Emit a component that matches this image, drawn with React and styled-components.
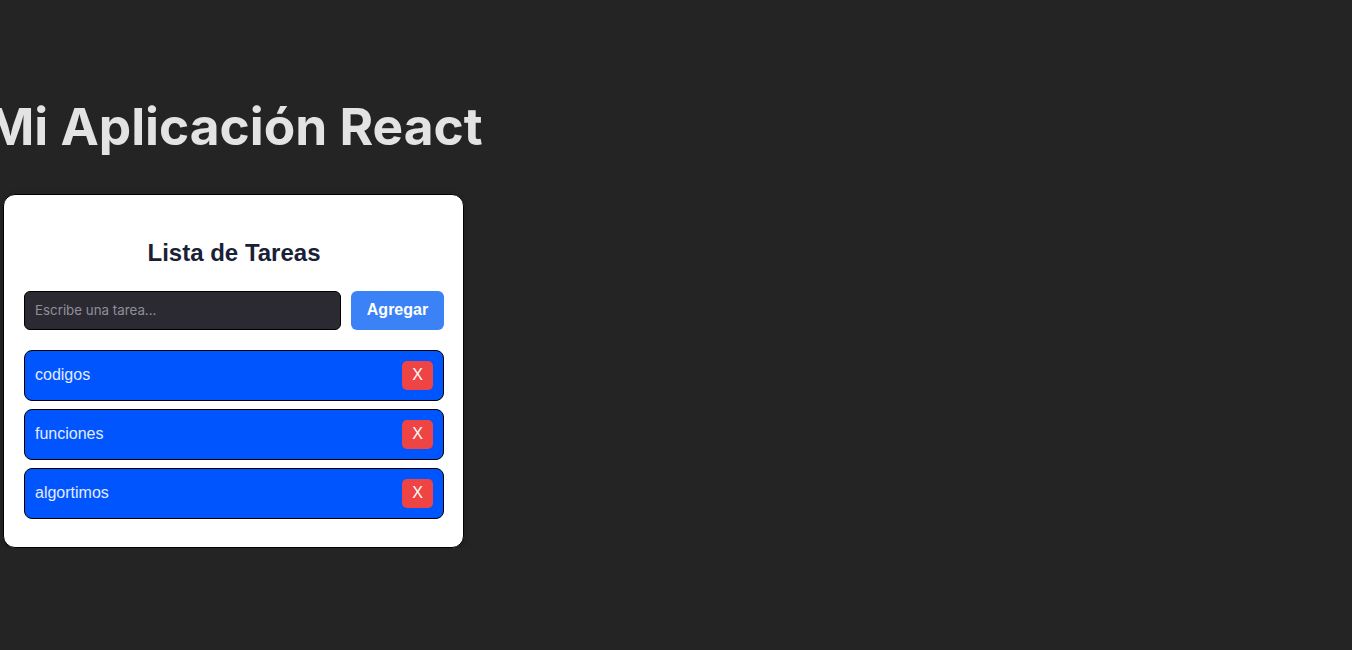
import React, { useState } from 'react';
import styled, { createGlobalStyle } from 'styled-components';

const GlobalStyle = createGlobalStyle`
  html, body {
    margin: 0;
    padding: 0;
    background-color: #242424;
  }
  body {
    font-family: Inter, "Liberation Sans", sans-serif;
    color: rgba(255, 255, 255, 0.87);
  }
`;

const Page = styled.div`
  width: 461px;
  margin-left: 3px;
  padding-top: 98px;
  display: flex;
  flex-direction: column;
  align-items: center;
`;

const Title = styled.h1`
  margin: 0 0 39px;
  font-family: Inter, sans-serif;
  font-size: 51.4px;
  line-height: 1.1;
  font-weight: 700;
  white-space: nowrap;
  color: #e3e3e3;
  transform: translateX(1px);
`;

const Card = styled.div`
  box-sizing: border-box;
  width: 100%;
  background: #fff;
  border: 1px solid #000;
  border-radius: 12px;
  padding: 20px 19px 28px 20px;
  box-shadow: 0 2px 6px rgba(0, 0, 0, 0.25);
`;

const Heading = styled.h2`
  margin: 24px 0 24px;
  text-align: center;
  font-family: "Liberation Sans", Arial, sans-serif;
  font-size: 24px;
  font-weight: 700;
  color: #1a2035;
`;

const Form = styled.form`
  display: flex;
  gap: 10px;
  margin-bottom: 20px;
`;

const Input = styled.input`
  flex: 1;
  box-sizing: border-box;
  height: 39px;
  padding: 0 10px;
  border: 1px solid #000;
  border-radius: 6px;
  background: #2b2a33;
  color: #fff;
  font-family: Inter, sans-serif;
  font-size: 13.333px;
  outline: none;

  &::placeholder {
    color: #8f8f99;
  }
`;

const AddButton = styled.button`
  box-sizing: border-box;
  height: 39px;
  width: 93px;
  border: none;
  border-radius: 6px;
  background: #3b82f6;
  color: #fff;
  font-family: "Liberation Sans", Arial, sans-serif;
  font-size: 16px;
  font-weight: 700;
  cursor: pointer;
`;

const List = styled.ul`
  list-style: none;
  margin: 0;
  padding: 0;
  display: flex;
  flex-direction: column;
  gap: 8px;
`;

const Item = styled.li`
  box-sizing: border-box;
  height: 51px;
  display: flex;
  align-items: center;
  justify-content: space-between;
  padding: 0 10px;
  background: #0055ff;
  border: 1px solid #000;
  border-radius: 8px;
  color: #e4ebff;
  font-family: "Liberation Sans", Arial, sans-serif;
  font-size: 16px;
`;

const DeleteButton = styled.button`
  width: 31px;
  height: 29px;
  padding: 0;
  border: none;
  border-radius: 5px;
  background: #ef4444;
  color: #fff;
  font-family: "Liberation Sans", Arial, sans-serif;
  font-size: 16px;
  cursor: pointer;
`;

const App = () => {
  const [tasks, setTasks] = useState(['codigos', 'funciones', 'algortimos']);
  const [text, setText] = useState('');

  const handleSubmit = (e) => {
    e.preventDefault();
    if (!text.trim()) return;
    setTasks([...tasks, text.trim()]);
    setText('');
  };

  const removeTask = (index) => {
    setTasks(tasks.filter((_, i) => i !== index));
  };

  return (
    <>
      <GlobalStyle />
      <Page>
        <Title>Mi Aplicación React</Title>
        <Card>
          <Heading>Lista de Tareas</Heading>
          <Form onSubmit={handleSubmit}>
            <Input
              placeholder="Escribe una tarea..."
              value={text}
              onChange={(e) => setText(e.target.value)}
            />
            <AddButton type="submit">Agregar</AddButton>
          </Form>
          <List>
            {tasks.map((task, i) => (
              <Item key={i}>
                {task}
                <DeleteButton onClick={() => removeTask(i)}>X</DeleteButton>
              </Item>
            ))}
          </List>
        </Card>
      </Page>
    </>
  );
};

export default App;
